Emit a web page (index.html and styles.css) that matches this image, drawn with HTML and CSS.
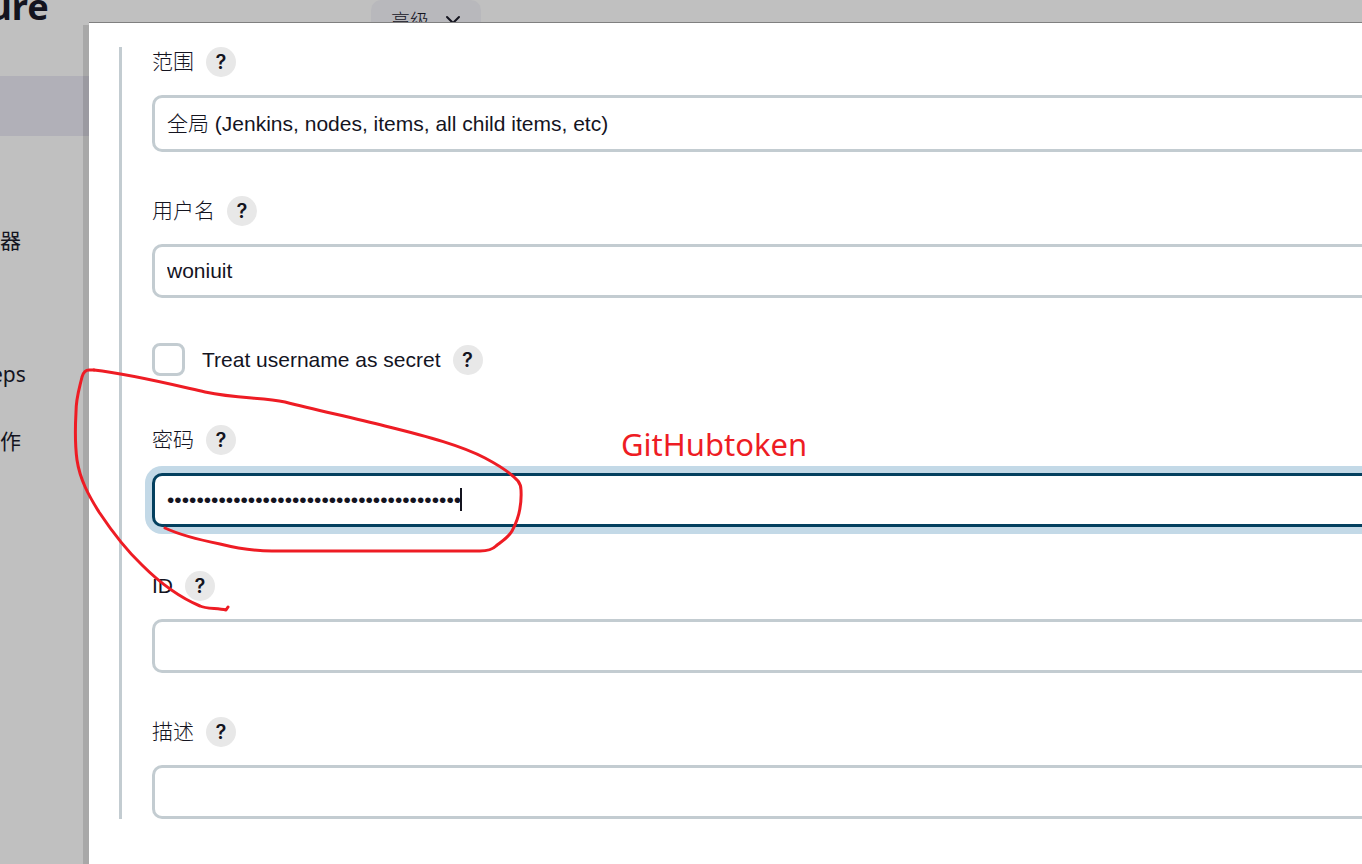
FILE: index.html
```html
<!DOCTYPE html>
<html lang="zh-CN">
<head>
<meta charset="utf-8">
<title>Configure</title>
<link rel="stylesheet" href="styles.css">
</head>
<body>
<div class="page">
  <aside class="sidebar">
    <h1 class="title">Configure</h1>
    <nav class="menu">
      <a class="item selected" href="#general">General</a>
      <a class="item" href="#scm">源码管理</a>
      <a class="item" href="#triggers">构建触发器</a>
      <a class="item" href="#environment">构建环境</a>
      <a class="item" href="#steps">Build Steps</a>
      <a class="item" href="#post">构建后操作</a>
    </nav>
  </aside>
  <div class="content">
    <button class="advanced" type="button">高级
      <svg width="16" height="10" viewBox="0 0 16 10" fill="none" stroke="#14141f" stroke-width="2" stroke-linecap="round"><path d="M2 2l6 6 6-6"/></svg>
    </button>
  </div>
</div>

<main class="dialog">
  <form class="form">
    <div class="field">
      <div class="label-row"><label for="scope">范围</label><button class="help" type="button">?</button></div>
      <select class="control scope" id="scope"><option>全局 (Jenkins, nodes, items, all child items, etc)</option></select>
    </div>
    <div class="field">
      <div class="label-row"><label for="user">用户名</label><button class="help" type="button">?</button></div>
      <input class="control" id="user" type="text" value="woniuit">
    </div>
    <div class="check-row">
      <input class="check" id="secret" type="checkbox">
      <label for="secret">Treat username as secret</label>
      <button class="help" type="button">?</button>
    </div>
    <div class="field">
      <div class="label-row"><label for="password">密码</label><button class="help" type="button">?</button></div>
      <div class="password">
        <input class="control active" id="password" type="password" value="abcdefghijabcdefghijabcdefghijabcdefghij">
        <span class="caret"></span>
      </div>
    </div>
    <div class="field">
      <div class="label-row"><label for="id">ID</label><button class="help" type="button">?</button></div>
      <input class="control" id="id" type="text">
    </div>
    <div class="field">
      <div class="label-row"><label for="description">描述</label><button class="help" type="button">?</button></div>
      <input class="control" id="description" type="text">
    </div>
  </form>
</main>

<svg class="stroke" width="460" height="260" viewBox="70 360 460 260" fill="none" stroke="#ee1c24" stroke-width="3" stroke-linecap="round" stroke-linejoin="round">
  <path d="M94 370H89Q84 370 82 377C79 390 76 398 76 412C75 430 75 445 77 460C80 480 89 496 99 512C111 530 125 549 142 565C161 584 181 598 200 606C206 609 217 608 226 610L228 607"/>
  <path d="M94 370C130 374 170 384 205 392C238 399 262 397 285 402C320 411 350 417 385 426C430 437 462 446 485 458C500 466 512 474 518 481Q521 485 521 490C522 508 517 522 512 531C508 538 501 542 496 546Q491 551 480 551H272C250 551 232 547 220 544C200 540 180 535 165 528"/>
</svg>
<p class="note">GitHubtoken</p>
</body>
</html>
```
FILE: styles.css
```css
* {
  box-sizing: border-box;
}

body {
  margin: 0;
  min-height: 100vh;
  overflow: hidden;
  position: relative;
  background: #c0c0c0;
  color: #14141f;
  font: 300 21px/30px "Liberation Sans", "Noto Sans CJK SC", sans-serif;
}

.page {
  position: absolute;
  inset: 0;
  display: flex;
  overflow: hidden;
}

.sidebar {
  flex: none;
  width: 300px;
  margin-left: -144px;
  font-family: "Noto Sans", "Noto Sans CJK SC", sans-serif;
}

.title {
  margin: 0 0 48px;
  padding-left: 16px;
  height: 28px;
  font-size: 36px;
  line-height: 14px;
  font-weight: 700;
}

.menu {
  display: grid;
  gap: 7px;
}

.item {
  height: 60px;
  padding-left: 60px;
  line-height: 60px;
  font-weight: 400;
  color: inherit;
  text-decoration: none;
}

.item.selected {
  background: #b1b0b8;
}

.content {
  flex: 1;
  padding-left: 215px;
}

.advanced {
  display: flex;
  align-items: center;
  gap: 16px;
  height: 40px;
  padding: 0 20px;
  border: 0;
  border-radius: 10px;
  background: #b8b8bc;
  color: inherit;
  font: 300 19px/40px "Noto Sans CJK SC", sans-serif;
}

.dialog {
  position: relative;
  margin: 22px 0 0 89px;
  padding: 24px 0 44px 30px;
  min-height: calc(100vh - 22px);
  border-top: 1px solid #808080;
  background: #fff;
  box-shadow: -6px 3px 0 rgba(0, 0, 0, 0.12);
}

.form {
  display: flex;
  flex-direction: column;
  gap: 44px;
  padding-left: 30px;
  border-left: 3px solid #c3ccd1;
}

.field {
  display: grid;
  gap: 18px;
}

.label-row {
  display: flex;
  align-items: center;
  gap: 12px;
  height: 30px;
}

.help {
  width: 30px;
  height: 30px;
  padding: 0;
  border: 0;
  border-radius: 50%;
  background: #e8e8e8;
  color: #14141f;
  font: 600 20px/30px Inter, sans-serif;
}

.control {
  appearance: none;
  display: block;
  width: 100%;
  height: 54px;
  margin: 0;
  padding: 0 12px;
  border: 3px solid #c3ccd1;
  border-right: 0;
  border-radius: 10px 0 0 10px;
  outline: 0;
  background: #fff;
  color: #14141f;
  font: inherit;
}

.scope {
  height: 57px;
}

.check-row {
  display: flex;
  align-items: center;
  height: 35px;
  margin-bottom: 4px;
}

.check {
  appearance: none;
  width: 33px;
  height: 33px;
  margin: 0 17px 0 0;
  border: 3px solid #c3ccd1;
  border-radius: 8px;
}

.check-row .help {
  margin-left: 12px;
}

.password {
  position: relative;
}

.active {
  border-color: #04405f;
  box-shadow: 0 0 0 7px #c3d9e7;
}

.caret {
  position: absolute;
  left: 308px;
  top: 15px;
  width: 2px;
  height: 23px;
  background: #14141f;
}

.stroke {
  position: absolute;
  left: 70px;
  top: 360px;
}

.note {
  position: absolute;
  left: 621px;
  top: 424px;
  margin: 0;
  color: #ee1c24;
  font: 400 31px/40px "Noto Sans", sans-serif;
}
```
